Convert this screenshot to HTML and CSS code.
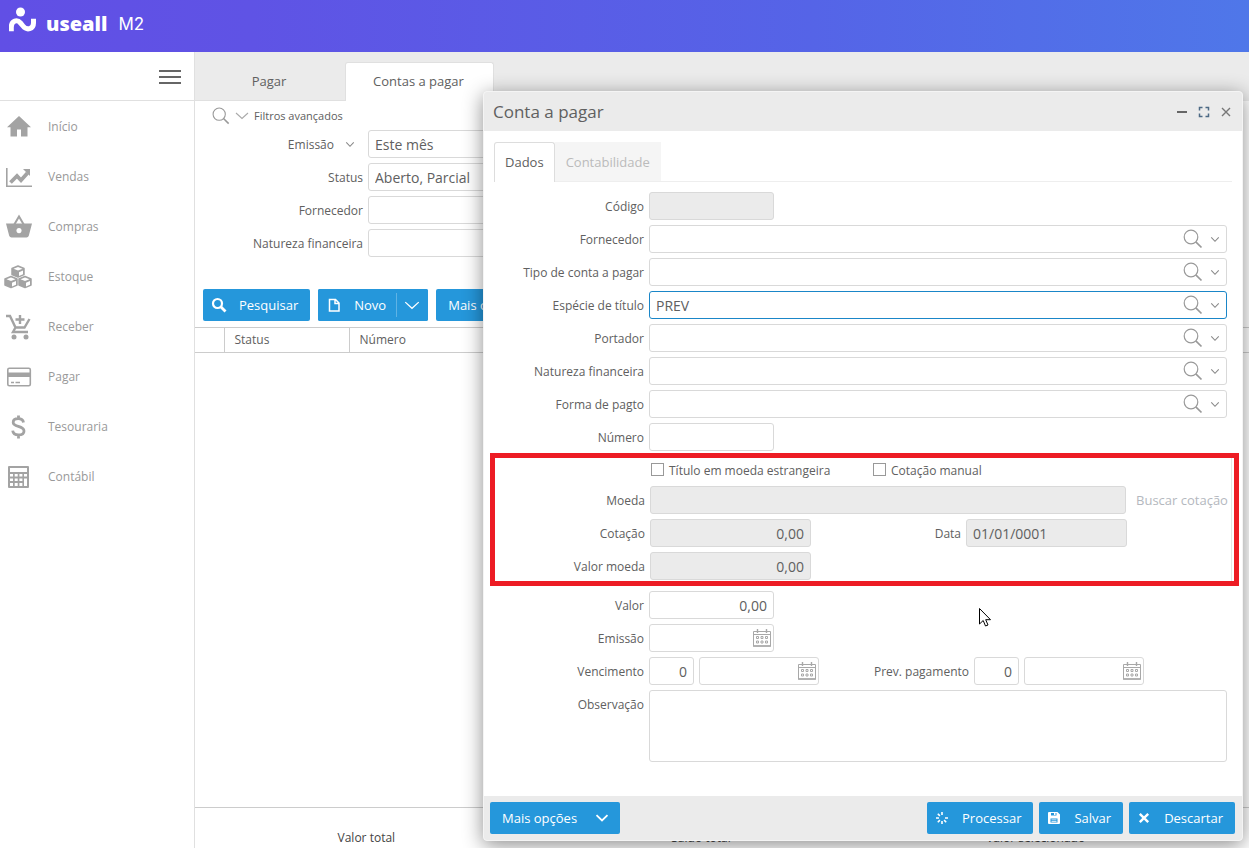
FILE: index.html
```html
<!DOCTYPE html>
<html lang="pt-BR">
<head>
<meta charset="utf-8">
<title>Useall M2 - Contas a pagar</title>
<link rel="stylesheet" href="styles.css">
</head>
<body>
<svg class="defs" aria-hidden="true">
  <symbol id="lens" viewBox="0 0 20 20"><circle cx="8" cy="8" r="6.8" fill="none" stroke="currentColor" stroke-width="1.2"/><path d="M12.8 12.8l5.7 5.7" stroke="currentColor" stroke-width="1.7"/></symbol>
  <symbol id="chev" viewBox="0 0 12 8"><path d="M1.5 1.5L6 6.2l4.500-4.700" fill="none" stroke="currentColor" stroke-width="1.300"/></symbol>
  <symbol id="chev-wide" viewBox="0 0 14 8"><path d="M1 1l6 5.500L13 1" fill="none" stroke="currentColor" stroke-width="1.100"/></symbol>
  <symbol id="chev-bold" viewBox="0 0 14 8"><path d="M1.500 1.200L7 6.500l5.500-5.300" fill="none" stroke="currentColor" stroke-width="1.800"/></symbol>
  <symbol id="cal" viewBox="0 0 18 18"><path d="M.5 2.500h17v14.500H.5zM.5 5.500h17" fill="none" stroke="currentColor"/><path d="M4.500 0v4M13.500 0v4M0 17h18" stroke="currentColor" stroke-width="1.400"/><path d="M3.500 7.500h2v2h-2zM8 7.500h2v2H8zM12.500 7.500h2v2h-2zM3.500 12h2v2h-2zM8 12h2v2H8zM12.500 12h2v2h-2z" fill="none" stroke="currentColor"/></symbol>
</svg>
<header class="topbar">
  <svg class="logo-mark" viewBox="0 0 28 26" aria-hidden="true"><circle cx="11.500" cy="5" r="4.500" fill="#fff"/><path d="M2.300 24.300v-4c0-7 6-8 9.200-4.300l2.500 3c4 5 10.500 3 10.500-3v-4.300" fill="none" stroke="#fff" stroke-width="5"/></svg>
  <span class="logo-name">useall</span><span class="logo-suffix">M2</span>
</header>
<div class="app">
  <nav class="sidebar">
    <div class="side-head"><button class="burger" type="button" aria-label="Menu"><span></span><span></span><span></span></button></div>
    <a class="side-item" href="#"><svg viewBox="0 0 26 26"><path d="M13 2L1 13.300H4.500V22.500h6.500v-7h4v7h6.500v-9.200H25z"/></svg>Início</a>
    <a class="side-item" href="#"><svg viewBox="0 0 26 26"><path d="M0 4h1.600v17.500H26V23H0z"/><path d="M4.500 18.500l6.500-6.500 4 4.200L21.500 9" fill="none" stroke="#a3a3a3" stroke-width="3.800"/><path d="M17 5H24v7z"/></svg>Vendas</a>
    <a class="side-item" href="#"><svg viewBox="0 0 26 26"><path d="M8 11l5-8.500 5 8.500" fill="none" stroke="#a3a3a3" stroke-width="2"/><path fill-rule="evenodd" d="M0 9.500h26l-3.200 12.300q-.5 1.700-2.300 1.700h-15q-1.800 0-2.300-1.700zM13 14a2.600 2.600 0 1 0 .01 0z"/></svg>Compras</a>
    <a class="side-item side-cubes" href="#"><svg viewBox="0 0 28 26"><g id="cube" stroke="#a3a3a3" stroke-width="1.500" stroke-linejoin="round"><path d="M14 2l6 2.500v6L14 13l-6-2.500v-6z"/><path d="M9.500 4.700L14 6.500l4.500-1.800L14 3z" fill="#fff" stroke="none"/><path d="M15 8.200l4-1.700v3.700l-4 1.700z" fill="#fff" stroke="none"/></g><use href="#cube" x="-7" y="10.500"/><use href="#cube" x="7" y="10.500"/></svg>Estoque</a>
    <a class="side-item" href="#"><svg viewBox="0 0 26 26"><path d="M0 2h4l5.500 11.500h9L23.500 5M9.500 13.500L7 18h15M14 1v9M9.500 5.500h9" fill="none" stroke="#a3a3a3" stroke-width="2.400"/><circle cx="8" cy="23" r="2.500"/><circle cx="20" cy="23" r="2.500"/></svg>Receber</a>
    <a class="side-item" href="#"><svg viewBox="0 0 26 26"><rect x="1.800" y="4.300" width="22.500" height="17.500" rx="1.500" fill="none" stroke="#a3a3a3" stroke-width="1.600"/><path d="M2 8.500h22V13H2z"/><path d="M5 18.500h3M9.500 18.500H14" stroke="#a3a3a3" stroke-width="1.500"/></svg>Pagar</a>
    <a class="side-item" href="#"><svg viewBox="0 0 26 26"><path d="M17.500 8.500c-.4-2.600-2.500-3.800-5.300-3.800-3 0-5 1.400-5 3.700 0 5.200 10.800 2.600 10.800 8.500 0 2.500-2.200 4-5.500 4-3.200 0-5.500-1.500-5.800-4.300M12.500 1.500v4M12.500 20.500v4" fill="none" stroke="#a3a3a3" stroke-width="2.800"/></svg>Tesouraria</a>
    <a class="side-item" href="#"><svg viewBox="0 0 26 26"><path fill-rule="evenodd" d="M3 2h19q1 0 1 1v20q0 1-1 1H3q-1 0-1-1V3q0-1 1-1zM4 4v4h17V4zM4 10v2.500h3V10zM8.700 10v2.500h3V10zM13.400 10v2.500h3V10zM18 10v2.500h3V10zM4 14.500V17h3v-2.500zM8.700 14.500V17h3v-2.500zM13.400 14.500V17h3v-2.500zM18 14.500V22h3v-7.500zM4 19v3h3v-3zM8.700 19v3h3v-3zM13.400 19v3h3v-3z"/></svg>Contábil</a>
  </nav>
  <main class="main">
    <div class="page-tabs" role="tablist"><button class="page-tab" type="button" role="tab">Pagar</button><button class="page-tab page-tab-on" type="button" role="tab" aria-selected="true">Contas a pagar</button></div>
    <section class="filters">
      <div class="filter-title"><svg class="ic-lens"><use href="#lens"/></svg><svg class="ic-chev-lg"><use href="#chev-wide"/></svg><span>Filtros avançados</span></div>
      <div class="filter-row"><label for="f1">Emissão<svg class="ic-chev"><use href="#chev"/></svg></label><div class="field"><input id="f1" value="Este mês"></div></div>
      <div class="filter-row"><label for="f2">Status</label><div class="field"><input id="f2" value="Aberto, Parcial"></div></div>
      <div class="filter-row"><label for="f3">Fornecedor</label><div class="field"><input id="f3"></div></div>
      <div class="filter-row"><label for="f4">Natureza financeira</label><div class="field"><input id="f4"></div></div>
    </section>
    <div class="toolbar">
      <button class="btn" type="button"><svg viewBox="0 0 16 16"><circle cx="6.500" cy="6.500" r="4.500" fill="none" stroke="#fff" stroke-width="2.200"/><path d="M10 10l4.500 4.500" stroke="#fff" stroke-width="2.800"/></svg>Pesquisar</button>
      <div class="split"><button class="btn" type="button"><svg viewBox="0 0 16 16"><path d="M3.500 2.500h6l3.500 3.500v8h-9.500zM9 2.500v4h4" fill="none" stroke="#fff" stroke-width="1.500"/></svg>Novo</button><button class="btn split-more" type="button" aria-label="Mais ações"><svg class="ic-chev-lg"><use href="#chev-wide"/></svg></button></div>
      <button class="btn btn-text" type="button">Mais opções</button>
    </div>
    <table class="grid"><thead><tr><th class="col-check"></th><th class="col-status">Status</th><th>Número</th></tr></thead></table>
    <footer class="totals"><span>Valor total</span><span>Saldo total</span><span>Valor selecionado</span></footer>
  </main>
</div>

<section class="dialog" role="dialog" aria-label="Conta a pagar">
  <header class="dlg-head"><h1>Conta a pagar</h1>
    <button type="button" aria-label="Minimizar"><svg viewBox="0 0 12 12"><path d="M1 6h10" stroke="#666" stroke-width="2"/></svg></button>
    <button type="button" aria-label="Maximizar"><svg viewBox="0 0 12 12"><path d="M1.500 4.500v-3h3M7.500 1.500h3v3M10.500 7.500v3h-3M4.500 10.500h-3v-3" fill="none" stroke="#4d6a85" stroke-width="1.500"/></svg></button>
    <button type="button" aria-label="Fechar"><svg viewBox="0 0 12 12"><path d="M2 2l8 8M10 2l-8 8" stroke="#777" stroke-width="1.400"/></svg></button>
  </header>
  <div class="dlg-tabs" role="tablist"><button class="dlg-tab dlg-tab-on" type="button" role="tab" aria-selected="true">Dados</button><button class="dlg-tab dlg-tab-off" type="button" role="tab" disabled>Contabilidade</button></div>
  <form class="form">
    <div class="row"><label for="codigo">Código</label><div class="field w-code"><input id="codigo" disabled></div></div>
    <div class="row"><label for="forn">Fornecedor</label><div class="field"><input id="forn"><svg class="ic-lens"><use href="#lens"/></svg><svg class="ic-chev"><use href="#chev"/></svg></div></div>
    <div class="row"><label for="tipo">Tipo de conta a pagar</label><div class="field"><input id="tipo"><svg class="ic-lens"><use href="#lens"/></svg><svg class="ic-chev"><use href="#chev"/></svg></div></div>
    <div class="row"><label for="esp">Espécie de título</label><div class="field field-on"><input id="esp" value="PREV"><svg class="ic-lens"><use href="#lens"/></svg><svg class="ic-chev"><use href="#chev"/></svg></div></div>
    <div class="row"><label for="port">Portador</label><div class="field"><input id="port"><svg class="ic-lens"><use href="#lens"/></svg><svg class="ic-chev"><use href="#chev"/></svg></div></div>
    <div class="row"><label for="nat">Natureza financeira</label><div class="field"><input id="nat"><svg class="ic-lens"><use href="#lens"/></svg><svg class="ic-chev"><use href="#chev"/></svg></div></div>
    <div class="row"><label for="forma">Forma de pagto</label><div class="field"><input id="forma"><svg class="ic-lens"><use href="#lens"/></svg><svg class="ic-chev"><use href="#chev"/></svg></div></div>
    <div class="row"><label for="num">Número</label><div class="field w-code"><input id="num"></div></div>

    <div class="marked"><div class="marked-in">
      <div class="checks"><label class="check-first"><input type="checkbox"><span>Título em moeda estrangeira</span></label><label><input type="checkbox"><span>Cotação manual</span></label></div>
      <div class="row"><label for="moeda">Moeda</label><div class="line"><div class="field grow"><input id="moeda" disabled></div><button class="quote" type="button" disabled>Buscar cotação</button></div></div>
      <div class="row"><label for="cot">Cotação</label><div class="line"><div class="field w-rate"><input id="cot" class="num" value="0,00" disabled></div><label class="side-label" for="data">Data</label><div class="field w-rate"><input id="data" value="01/01/0001" disabled></div></div></div>
      <div class="row"><label for="vm">Valor moeda</label><div class="field w-rate"><input id="vm" class="num" value="0,00" disabled></div></div>
    </div></div>

    <div class="row"><label for="valor">Valor</label><div class="field w-code"><input id="valor" class="num" value="0,00"></div></div>
    <div class="row"><label for="emi">Emissão</label><div class="field w-code"><input id="emi"><svg class="ic-cal"><use href="#cal"/></svg></div></div>
    <div class="row"><label for="venc">Vencimento</label><div class="line"><div class="field w-days"><input id="venc" class="num" value="0"></div><div class="field w-date"><input aria-label="Data de vencimento"><svg class="ic-cal"><use href="#cal"/></svg></div><label class="side-label" for="prev">Prev. pagamento</label><div class="field w-days"><input id="prev" class="num" value="0"></div><div class="field w-date"><input aria-label="Data prevista"><svg class="ic-cal"><use href="#cal"/></svg></div></div></div>
    <div class="row"><label for="obs">Observação</label><textarea id="obs"></textarea></div>
  </form>
  <footer class="dlg-foot">
    <button class="btn btn-menu" type="button">Mais opções<svg class="ic-chev-md"><use href="#chev-bold"/></svg></button>
    <button class="btn" type="button"><svg viewBox="0 0 16 16"><path d="M8 2v3M8 11v3M2 8h3M11 8h3M3.800 3.800L5.900 5.900M10.100 10.100l2.100 2.100M3.800 12.200l2.100-2.100" stroke="#fff" stroke-width="1.600"/></svg>Processar</button>
    <button class="btn" type="button"><svg viewBox="0 0 16 16"><path fill-rule="evenodd" d="M3 2h8.500L14 4.500V13q0 1-1 1H3q-1 0-1-1V3q0-1 1-1zM5 3v2.500h5.500V3zM4.500 8.500V12.500h7V8.500z" fill="#fff"/><path d="M8 3h1.500v2H8zM5.500 9.500h5v.8h-5zM5.500 11.200h5v.8h-5z" fill="#fff"/></svg>Salvar</button>
    <button class="btn" type="button"><svg viewBox="0 0 16 16"><path d="M3.800 3.800l8.400 8.400M12.200 3.800l-8.400 8.400" stroke="#fff" stroke-width="2.400"/></svg>Descartar</button>
  </footer>
</section>
<svg class="pointer" viewBox="0 0 12 19" aria-hidden="true"><path d="M.5.5v15.500l3.700-3.500 2.300 5.500 2.500-1-2.300-5.300h4.800z" fill="#fff" stroke="#000"/></svg>
</body>
</html>
```
FILE: styles.css
```css
* { box-sizing: border-box; }
body { margin: 0; height: 100vh; overflow: hidden; display: flex; flex-direction: column; background: #fff; color: #606060; font: 12px/16px "Open Sans", "Noto Sans", sans-serif; }
button, input, textarea { font: inherit; color: inherit; }
button { border: 0; background: none; padding: 0; }
svg { flex: none; display: block; }
.defs { position: absolute; width: 0; height: 0; }

.topbar { flex: none; height: 52px; padding: 7px 9px 0; display: flex; align-items: flex-start; color: #fff; background: linear-gradient(90deg, #614fe5 0%, #5f53e5 20%, #5564e7 65%, #4f77e9 100%); }
.logo-mark { width: 28px; height: 26px; }
.logo-name { margin-left: 9px; font: 800 20px/34px "Open Sans", sans-serif; }
.logo-suffix { margin-left: 11px; font: 400 17px/35px Inter, sans-serif; }

.app { flex: 1; min-height: 0; display: flex; }
.sidebar { flex: none; width: 195px; border-right: 1px solid #e0e0e0; }
.side-head { height: 49px; margin-bottom: 1px; border-bottom: 1px solid #e0e0e0; display: flex; justify-content: flex-end; align-items: center; padding: 2px 13px 0 0; }
.burger { width: 22px; display: flex; flex-direction: column; gap: 4px; }
.burger span { height: 2px; background: #666; }
.side-item { height: 50px; padding-left: 6px; display: flex; align-items: center; gap: 16px; color: #999; text-decoration: none; }
.side-item svg { width: 26px; height: 26px; fill: #a3a3a3; }
.side-cubes { padding-left: 4px; }
.side-cubes svg { width: 28px; }

.main { flex: 1; min-width: 0; display: flex; flex-direction: column; }
.page-tabs { flex: none; height: 49px; padding-top: 10px; background: #ebebeb; display: flex; }
.page-tab { width: 150px; padding-right: 2px; font-size: 13px; border-bottom: 1px solid #e0e0e0; }
.page-tab-on { width: 149px; padding-bottom: 2px; background: #fff; border-radius: 3px 3px 0 0; border: 1px solid #e0e0e0; border-bottom: 0; }
.filters { padding-top: 5px; display: flex; flex-direction: column; gap: 5px; }
.filter-title { height: 19px; padding-left: 17px; display: flex; align-items: center; gap: 5px; font-size: 11px; }
.filter-title .ic-lens { width: 18px; height: 18px; }
.filter-row { height: 28px; display: grid; grid-template-columns: 168px 200px; gap: 5px; }
.filter-row label { display: flex; justify-content: flex-end; align-items: center; gap: 11px; padding-top: 2px; }
.filter-row label .ic-chev { margin: 0 8px 2px 0; }
.toolbar { margin-top: 32px; padding-left: 8px; display: flex; gap: 8px; }
.grid { margin-top: 6px; border-collapse: collapse; table-layout: fixed; width: 100%; }
.grid th { height: 25px; padding: 0 10px; border-top: 1px solid #ccc; border-bottom: 1px solid #ccc; border-right: 1px solid #ccc; text-align: left; font-weight: 400; }
.grid th:last-child { border-right: 0; }
.grid .col-check { width: 29px; }
.grid .col-status { width: 125px; }
.totals { margin-top: auto; height: 41px; padding: 22px 46px 0 4px; border-top: 1px solid #ccc; display: grid; grid-template-columns: repeat(3, 1fr); text-align: center; color: #444; }

.btn { height: 32px; padding: 0 12px 0 8px; display: flex; align-items: center; gap: 12px; background: #2597db; color: #fff; border-radius: 2px; font-size: 13px; white-space: nowrap; }
.btn > svg { width: 16px; height: 16px; }
.btn-text { padding: 0 12px; }
.split { display: flex; background: #2597db; border-radius: 2px; }
.split .btn { padding-right: 10px; }
.split-more::before { content: ""; width: 1px; height: 24px; background: #5fb3e5; }
.split .split-more { padding: 0 8px 0 0; gap: 7px; }
.ic-chev-lg { width: 14px; height: 8px; color: #aaa; }
.btn .ic-chev-lg { width: 16px; height: 9px; color: #fff; }
.ic-chev { width: 10px; height: 7px; color: #888; }
.ic-lens { width: 20px; height: 20px; color: #999; }
.ic-cal { width: 18px; height: 18px; color: #a8a8a8; }

.field { min-width: 0; height: 28px; display: flex; align-items: center; background: #fff; border: 1px solid #d9d9d9; border-radius: 3px; }
.field input { flex: 1; min-width: 0; width: 0; height: 26px; padding: 0 6px; border: 0; outline: 0; background: transparent; font-size: 14px; }
.field:has(input:disabled) { background: #ebebeb; }
.field .num { text-align: right; }
.field-on { border-color: #1a86c8; }
.field .ic-lens { margin-right: 7px; }
.field .ic-chev { margin-right: 6px; }
.field .ic-cal { margin-right: 2px; }

.dialog { position: absolute; left: 483px; right: 6px; top: 91px; bottom: 7px; display: flex; flex-direction: column; background: #fff; border: 1px solid #f4f4f4; border-radius: 4px; box-shadow: 0 4px 20px rgba(0, 0, 0, .45); }
.dlg-head { flex: none; height: 39px; padding: 0 10px 0 9px; display: flex; align-items: center; gap: 10px; background: #ebebeb; border-radius: 3px 3px 0 0; }
.dlg-head h1 { flex: 1; margin: 0; font-size: 17px; font-weight: 400; }
.dlg-head svg { width: 12px; height: 12px; }
.dlg-tabs { flex: none; height: 40px; margin: 11px 10px 0; border-bottom: 1px solid #eee; display: flex; }
.dlg-tab { height: 39px; font-size: 13px; padding: 0 11px; }
.dlg-tab-on { height: 40px; padding: 0 10px 2px; background: #fff; border: 1px solid #ddd; border-bottom: 0; border-radius: 3px 3px 0 0; }
.dlg-tab-off { background: #f5f5f5; color: #bbb; }
.form { flex: 1; padding: 10px 15px 0 10px; display: flex; flex-direction: column; gap: 5px; }
.row { display: grid; grid-template-columns: 150px 1fr; gap: 5px; }
.row > label, .side-label { height: 28px; line-height: 30px; text-align: right; white-space: nowrap; }
.line { display: flex; gap: 5px; }
.side-label { width: 150px; margin-left: -5px; }
.w-code { width: 125px; }
.w-rate { width: 161px; }
.w-days { width: 45px; }
.w-date { width: 120px; }
.grow { flex: 1; }
.marked { margin: -3px -12px 0 -4px; border: 5px solid #ed1c24; }
.marked-in { margin-right: 2px; padding-bottom: 1px; border-right: 1px solid #e6e6e6; display: flex; flex-direction: column; gap: 5px; }
.checks { height: 23px; padding-left: 156px; display: flex; align-items: center; }
.checks label { display: flex; align-items: center; gap: 5px; }
.checks span { padding-top: 2px; }
.check-first { width: 222px; }
.checks input { appearance: none; width: 13px; height: 13px; margin: 0; border: 1px solid #999; background: #fff; }
.quote { width: 100px; padding: 0 0 0 2px; color: #b4b8be; text-align: center; white-space: nowrap; font-size: 13px; }
textarea { display: block; width: 100%; height: 72px; resize: none; border: 1px solid #d9d9d9; border-radius: 3px; outline: 0; }
.dlg-foot { flex: none; height: 44px; padding: 0 7px 0 6px; display: flex; align-items: center; gap: 6px; background: #ebebeb; border-radius: 0 0 3px 3px; }
.dlg-foot .btn { padding-right: 12px; padding-left: 7px; }
.dlg-foot .btn-menu { margin-right: auto; padding: 0 11px 0 12px; gap: 18px; }
.btn .ic-chev-md { width: 14px; height: 8px; }
.pointer { position: absolute; left: 979px; top: 608px; width: 12px; height: 19px; }
```
